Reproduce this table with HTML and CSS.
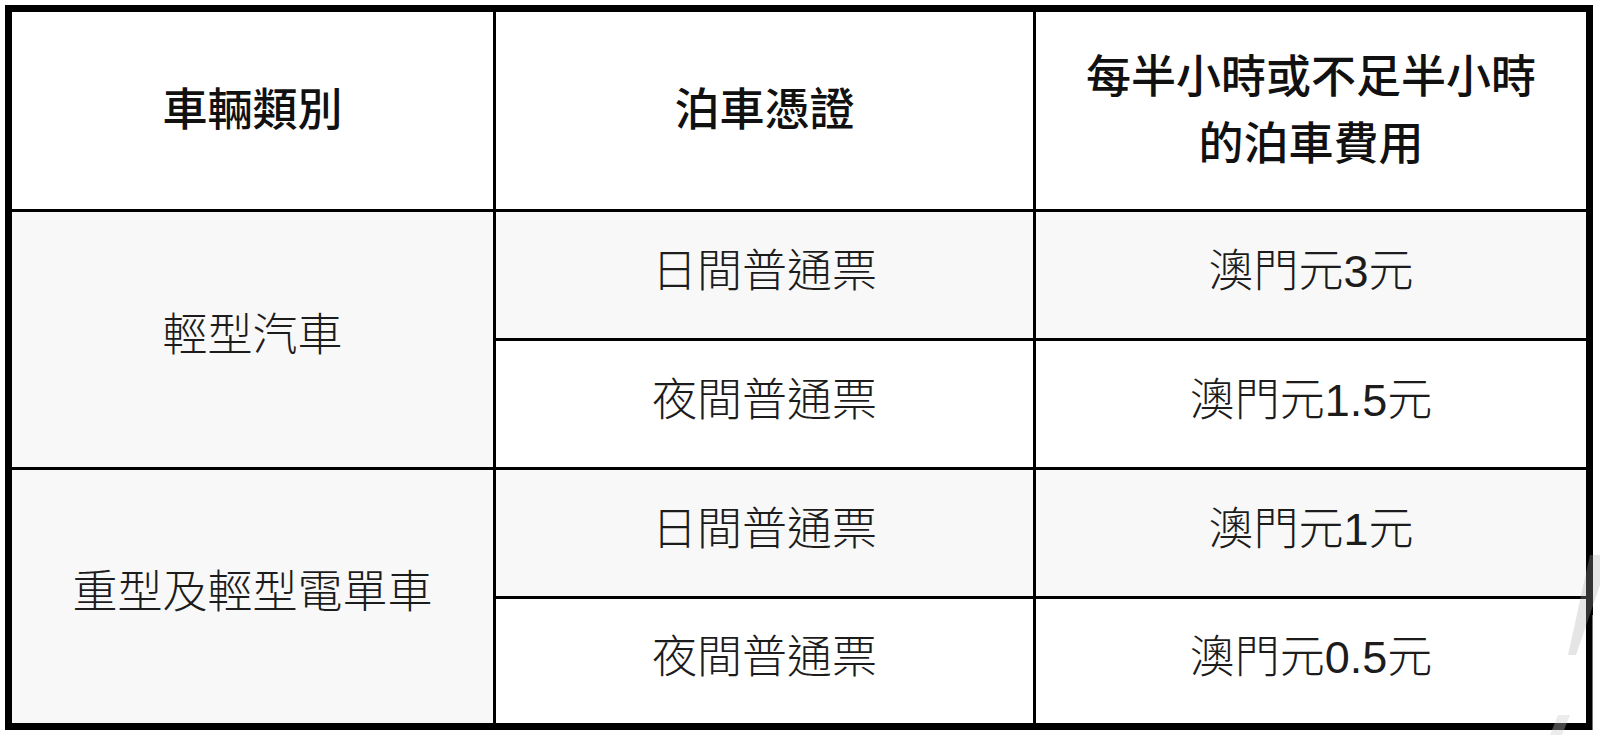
FILE: index.html
```html
<!DOCTYPE html>
<html lang="zh-Hant">
<head>
<meta charset="utf-8">
<title>泊車費用</title>
<link rel="stylesheet" href="styles.css">
</head>
<body>
<div class="sheet">
  <div class="fee-table">
    <div class="cell head">車輛類別</div>
    <div class="cell head">泊車憑證</div>
    <div class="cell head">每半小時或不足半小時<br>的泊車費用</div>

    <div class="cell shade span2">輕型汽車</div>
    <div class="cell shade">日間普通票</div>
    <div class="cell shade">澳門元3元</div>
    <div class="cell">夜間普通票</div>
    <div class="cell">澳門元1.5元</div>

    <div class="cell shade span2">重型及輕型電單車</div>
    <div class="cell shade">日間普通票</div>
    <div class="cell shade">澳門元1元</div>
    <div class="cell">夜間普通票</div>
    <div class="cell">澳門元0.5元</div>
  </div>
  <svg class="watermark" width="70" height="180" viewBox="0 0 70 180" aria-hidden="true">
    <path d="M60 0 L70 0 L70 30 L46 100 L38 100 Z" fill="rgba(170,170,170,0.3)"/>
    <path d="M62 60 L70 60 L70 180 L62 180 Z" fill="rgba(255,255,255,0.45)"/>
    <path d="M28 160 L40 160 L32 180 L20 180 Z" fill="rgba(200,200,200,0.35)"/>
  </svg>
</div>
</body>
</html>
```

FILE: styles.css
```css
html, body {
  margin: 0;
  padding: 0;
  background: #ffffff;
}

body {
  font-family: "Liberation Sans", "Noto Sans CJK TC", "Noto Sans CJK SC", sans-serif;
  color: #1c1c1c;
}

.sheet {
  position: relative;
  width: 1600px;
  height: 735px;
  overflow: hidden;
}

.fee-table {
  box-sizing: border-box;
  margin: 5px 7px 5px 5px;
  width: 1588px;
  height: 725px;
  padding: 7px;
  background: #000;
  display: grid;
  grid-template-columns: 481px 537px 550px;
  grid-template-rows: 197px 126px 126px 126px 124px;
  gap: 3px;
}

.cell {
  box-sizing: border-box;
  background: #ffffff;
  display: flex;
  align-items: center;
  justify-content: center;
  text-align: center;
  font-size: 45px;
  line-height: 67px;
  font-weight: 300;
  padding-bottom: 8px;
}

.head {
  font-family: "Noto Sans CJK TC", "Noto Sans CJK SC", sans-serif;
  font-weight: 500;
  color: #111;
}

.shade {
  background: #f8f8f8;
}

.span2 {
  grid-row: span 2;
}

.watermark {
  position: absolute;
  right: 0;
  bottom: 0;
}
```
